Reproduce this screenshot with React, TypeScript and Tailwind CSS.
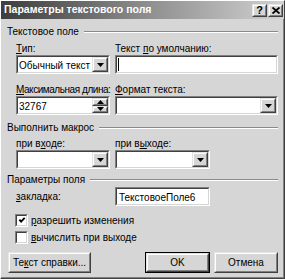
import type { ReactNode } from 'react';

const face = 'bg-[#d6d6d6]';

function Sunken({ className = '', children }: { className?: string; children?: ReactNode }) {
  return (
    <div className={`border border-t-[#808080] border-l-[#808080] border-b-white border-r-white ${className}`}>
      <div className="flex h-full items-center border border-t-[#404040] border-l-[#404040] border-b-[#d6d6d6] border-r-[#d6d6d6] bg-white">
        {children}
      </div>
    </div>
  );
}

function Raised({ className = '', children }: { className?: string; children?: ReactNode }) {
  return (
    <div className={`border border-t-[#e4e4e4] border-l-[#e4e4e4] border-b-[#404040] border-r-[#404040] ${face} ${className}`}>
      <div className="flex h-full w-full items-center justify-center border border-t-white border-l-white border-b-[#808080] border-r-[#808080]">
        {children}
      </div>
    </div>
  );
}

function Arrow({ up = false }: { up?: boolean }) {
  return (
    <svg width="7" height="4" viewBox="0 0 7 4">
      <path d={up ? 'M3.5 0L7 4H0z' : 'M0 0h7L3.5 4z'} fill="#000" />
    </svg>
  );
}

function Combo({ width, text }: { width: string; text?: string }) {
  return (
    <Sunken className={`${width} h-[19px]`}>
      <span className="flex-1 pl-[1px] pt-[1px]">{text}</span>
      <Raised className="h-full w-[16px]">
        <Arrow />
      </Raised>
    </Sunken>
  );
}

function Group({ label }: { label: string }) {
  return (
    <div className="flex items-center gap-[5px] leading-[12px]">
      <span>{label}</span>
      <div className="h-[2px] flex-1 border-t border-t-[#8a8a8a] border-b border-b-white" />
    </div>
  );
}

function Check({ checked, children }: { checked?: boolean; children: ReactNode }) {
  return (
    <div className="flex h-[13px] items-center gap-[3px] pl-[8px]">
      <Sunken className="h-[13px] w-[13px]">
        {checked && (
          <svg width="9" height="9" viewBox="0 0 9 9" className="ml-[1px]">
            <path d="M1.5 3.5L3.5 5.8L7.5 1.5" stroke="#000" strokeWidth="2" fill="none" />
          </svg>
        )}
      </Sunken>
      <span className="leading-[13px]">{children}</span>
    </div>
  );
}

export default function App() {
  return (
    <div
      className={`flex h-[279px] w-[285px] flex-col whitespace-nowrap border border-t-white border-l-white border-b-[#404040] border-r-[#404040] ${face} text-[10px] text-black`}
      style={{ fontFamily: '"Liberation Sans", Arial, sans-serif' }}
    >
      <div className="flex h-[18px] items-center bg-gradient-to-r from-[#3e3e3e] via-[#8c8c8c] to-[#d2d2d2] pl-[3px] pr-[1px]">
        <span className="flex-1 text-[10.5px] font-bold text-white">Параметры текстового поля</span>
        <div className="flex gap-[1px]">
          <Raised className="h-[13px] w-[15px]">
            <span className="text-[11px] font-bold leading-none">?</span>
          </Raised>
          <Raised className="h-[13px] w-[15px]">
            <svg width="8" height="7" viewBox="0 0 8 7">
              <path d="M0.5 0.5L7.5 6.5M7.5 0.5L0.5 6.5" stroke="#000" strokeWidth="1.8" />
            </svg>
          </Raised>
        </div>
      </div>

      <div className="flex flex-1 flex-col border-r border-b border-r-[#808080] border-b-[#808080] pl-[6px] pr-[5px] pt-[7px]">
        <Group label="Текстовое поле" />

        <div className="mt-[5px] flex gap-[5px] pl-[9px] leading-[12px]">
          <span className="w-[94px]">
            <u>Т</u>ип:
          </span>
          <span>
            Текст <u>п</u>о умолчанию:
          </span>
        </div>
        <div className="flex gap-[5px] pl-[9px]">
          <Combo width="w-[94px]" text="Обычный текст" />
          <Sunken className="h-[19px] flex-1">
            <div className="ml-[1px] h-[13px] w-[1px] bg-black" />
          </Sunken>
        </div>

        <div className="mt-[10px] flex gap-[5px] pl-[9px] leading-[12px]">
          <span className="w-[94px] tracking-[-0.45px]">
            <u>М</u>аксимальная длина:
          </span>
          <span>
            <u>Ф</u>ормат текста:
          </span>
        </div>
        <div className="flex gap-[5px] pl-[9px]">
          <Sunken className="h-[19px] w-[94px]">
            <span className="flex-1 pl-[1px] pt-[1px]">32767</span>
            <div className="flex h-full w-[16px] flex-col">
              <Raised className="h-1/2 w-full">
                <Arrow up />
              </Raised>
              <Raised className="h-1/2 w-full">
                <Arrow />
              </Raised>
            </div>
          </Sunken>
          <Combo width="flex-1" />
        </div>

        <div className="mt-[7px]">
          <Group label="Выполнить макрос" />
        </div>
        <div className="mt-[4px] flex gap-[5px] pl-[9px] leading-[12px]">
          <span className="w-[94px]">
            при в<u>х</u>оде:
          </span>
          <span>
            при в<u>ы</u>ходе:
          </span>
        </div>
        <div className="flex gap-[5px] pl-[9px]">
          <Combo width="w-[94px]" />
          <Combo width="w-[95px]" />
        </div>

        <div className="mt-[5px]">
          <Group label="Параметры поля" />
        </div>
        <div className="mt-[1px] flex items-center gap-[5px] pl-[9px]">
          <span className="w-[94px]">
            <u>з</u>акладка:
          </span>
          <Sunken className="h-[19px] w-[95px]">
            <span className="pl-[2px] pt-[1px]">ТекстовоеПоле6</span>
          </Sunken>
        </div>

        <div className="mt-[8px]">
          <Check checked>
            <u>р</u>азрешить изменения
          </Check>
        </div>
        <div className="mt-[4px]">
          <Check>
            <u>в</u>ычислить при выходе
          </Check>
        </div>

        <div className="mt-[8px] flex gap-[4px] pl-[1px]">
          <Raised className="h-[21px] w-[83px]">
            <span>
              Те<u>к</u>ст справки...
            </span>
          </Raised>
          <div className="ml-auto border border-black">
            <Raised className="h-[19px] w-[63px]">
              <span>OK</span>
            </Raised>
          </div>
          <Raised className="h-[21px] w-[64px]">
            <span>Отмена</span>
          </Raised>
        </div>
      </div>
    </div>
  );
}
